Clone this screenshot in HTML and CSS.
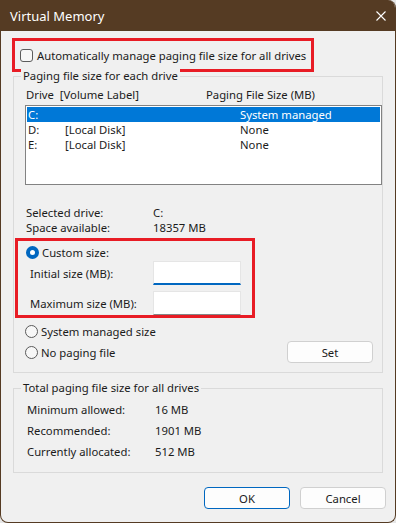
FILE: index.html
```html
<!DOCTYPE html>
<html lang="en">
<head>
    <meta charset="UTF-8" />
    <title>Virtual Memory</title>
    <link rel="stylesheet" href="styles.css">
</head>
<body>
    <div class="window">
        <div class="titlebar">
            <span>Virtual Memory</span>
            <svg class="close" width="10" height="10" viewBox="0 0 10 10">
                <path d="M0.5 0.5 L9.5 9.5 M9.5 0.5 L0.5 9.5" stroke="#fff" stroke-width="1.1" fill="none" />
            </svg>
        </div>
        <div class="content">
            <div class="auto highlight">
                <span class="check"></span>
                <span>Automatically manage paging file size for all drives</span>
            </div>

            <div class="group group-drives">
                <span class="legend">Paging file size for each drive</span>
                <div class="list-head">
                    <span class="col-drive">Drive&nbsp; [Volume Label]</span>
                    <span>Paging File Size (MB)</span>
                </div>
                <div class="listbox">
                    <div class="row selected">
                        <span class="c1">C:</span><span class="c2"></span><span>System managed</span>
                    </div>
                    <div class="row">
                        <span class="c1">D:</span><span class="c2">[Local Disk]</span><span>None</span>
                    </div>
                    <div class="row">
                        <span class="c1">E:</span><span class="c2">[Local Disk]</span><span>None</span>
                    </div>
                </div>

                <div class="info">
                    <div class="info-row"><span class="info-label">Selected drive:</span><span>C:</span></div>
                    <div class="info-row"><span class="info-label">Space available:</span><span>18357 MB</span></div>
                </div>

                <div class="custom highlight">
                    <div class="radio-row">
                        <span class="radio on"></span><span>Custom size:</span>
                    </div>
                    <div class="field-row">
                        <span class="field-label">Initial size (MB):</span>
                        <span class="field focused"></span>
                    </div>
                    <div class="field-row second">
                        <span class="field-label">Maximum size (MB):</span>
                        <span class="field"></span>
                    </div>
                </div>

                <div class="radio-row plain">
                    <span class="radio"></span><span>System managed size</span>
                </div>
                <div class="set-row">
                    <div class="radio-row">
                        <span class="radio"></span><span>No paging file</span>
                    </div>
                    <button class="btn">Set</button>
                </div>
            </div>

            <div class="group group-total">
                <span class="legend">Total paging file size for all drives</span>
                <div class="total-row"><span class="total-label">Minimum allowed:</span><span>16 MB</span></div>
                <div class="total-row"><span class="total-label">Recommended:</span><span>1901 MB</span></div>
                <div class="total-row"><span class="total-label">Currently allocated:</span><span>512 MB</span></div>
            </div>

            <div class="actions">
                <button class="btn default">OK</button>
                <button class="btn">Cancel</button>
            </div>
        </div>
    </div>
</body>
</html>
```

FILE: styles.css
```css
* {
    margin: 0;
    padding: 0;
    box-sizing: border-box;
}

body {
    background-color: #e6e6e6;
    font-family: "Noto Sans", sans-serif;
    font-size: 11.3px;
    color: #1b1b1b;
}

.window {
    width: 396px;
    height: 523px;
    background-color: #f0f0f0;
    border: 1px solid #553b23;
    border-top: 0;
    border-radius: 0 8px 8px 8px;
    overflow: hidden;
}

.titlebar {
    height: 31px;
    background-color: #553b23;
    color: #fff;
    font-size: 13px;
    display: flex;
    align-items: center;
    justify-content: space-between;
    padding: 0 9px 0 9px;
}

.content {
    padding: 7px 9px 0 11px;
}

.highlight {
    border: 3px solid #e81c25;
}

.auto {
    width: 302px;
    height: 34px;
    display: flex;
    align-items: center;
    gap: 4px;
    padding-left: 5px;
}

.check {
    width: 13px;
    height: 13px;
    border: 1px solid #5c5c5c;
    border-radius: 3px;
    background-color: #f7f7f7;
}

.group {
    position: relative;
    width: 370px;
    margin-left: 1px;
    border: 1px solid #dadada;
}

.legend {
    position: absolute;
    top: -9px;
    left: 7px;
    padding: 0 2px;
    background-color: #f0f0f0;
    line-height: 16px;
}

.group-drives {
    margin-top: 4px;
    height: 297px;
    padding-top: 10px;
}

.list-head {
    display: flex;
    line-height: 16px;
    padding-left: 12px;
}

.col-drive {
    width: 180px;
}

.listbox {
    margin: 2px 0 0 11px;
    width: 357px;
    height: 80px;
    border: 1px solid #828282;
    background-color: #fff;
    padding: 1px;
}

.row {
    display: flex;
    height: 15px;
    line-height: 15px;
    padding-left: 1px;
}

.row.selected {
    background-color: #0078d7;
    color: #fff;
}

.c1 {
    width: 37px;
}

.c2 {
    width: 175px;
}

.info {
    margin-top: 20px;
    padding-left: 12px;
}

.info-row {
    display: flex;
    line-height: 15px;
}

.info-label {
    width: 127px;
}

.custom {
    width: 240px;
    height: 80px;
    margin: 3px 0 0 1px;
    padding: 3px 0 0 8px;
}

.radio-row {
    display: flex;
    align-items: center;
    gap: 3px;
    height: 16px;
}

.radio {
    width: 13px;
    height: 13px;
    border: 1px solid #5a5a5a;
    border-radius: 50%;
    background-color: #f7f7f7;
}

.radio.on {
    border: 4px solid #0067c0;
    background-color: #fff;
}

.field-row {
    display: flex;
    align-items: center;
    margin-top: 1px;
    padding-left: 4px;
}

.field-row.second {
    margin-top: 6px;
}

.field-label {
    width: 123px;
}

.field {
    width: 88px;
    height: 24px;
    background-color: #fff;
    border: 1px solid #e5e5e5;
    border-bottom: 1px solid #868686;
}

.field.focused {
    border-bottom: 2px solid #0067c0;
}

.plain {
    margin: 5px 0 0 11px;
}

.set-row {
    display: flex;
    align-items: center;
    justify-content: space-between;
    margin-top: 2px;
    padding: 0 9px 0 11px;
}

.btn {
    width: 86px;
    height: 22px;
    font-family: inherit;
    font-size: 11.3px;
    color: #1b1b1b;
    background-color: #fdfdfd;
    border: 1px solid #d0d0d0;
    border-radius: 4px;
}

.btn.default {
    border-color: #0067c0;
}

.group-total {
    margin-top: 15px;
    height: 85px;
    padding: 10px 0 0 13px;
}

.total-row {
    display: flex;
    height: 21px;
    align-items: center;
}

.total-label {
    width: 128px;
}

.actions {
    display: flex;
    justify-content: flex-end;
    gap: 10px;
    margin-top: 14px;
}
```
